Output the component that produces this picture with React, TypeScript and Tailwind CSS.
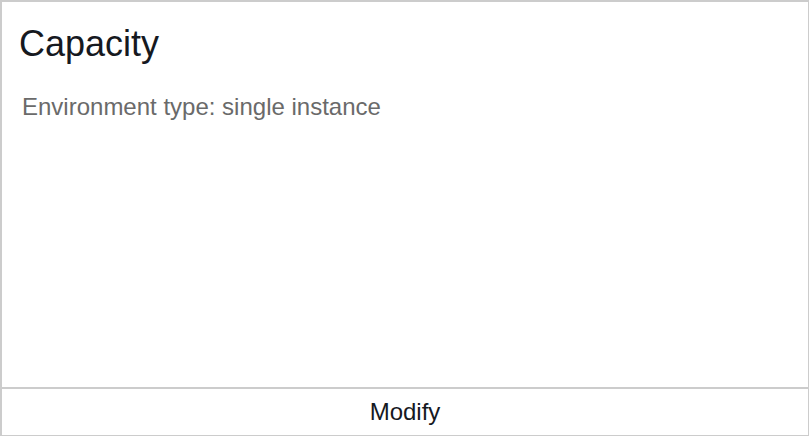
export default function App() {
  return (
    <div
      className="w-[809px] h-[436px] bg-white flex flex-col border-t-2 border-l-2 border-r border-b border-[#cccccc]"
      style={{ fontFamily: '"Liberation Sans", Arial, sans-serif' }}
    >
      <div className="flex-1 px-[17px] pt-[20px]">
        <h2 className="text-[36px] leading-[43px] text-[#16191f]">Capacity</h2>
        <p className="mt-[24px] ml-[3px] text-[24px] leading-[36px] text-[#6a6a6a]">
          Environment type: single instance
        </p>
      </div>
      <div className="h-[48px] border-t-2 border-[#cccccc] flex items-center justify-center">
        <span className="text-[24px] leading-none text-[#16191f]">Modify</span>
      </div>
    </div>
  );
}
